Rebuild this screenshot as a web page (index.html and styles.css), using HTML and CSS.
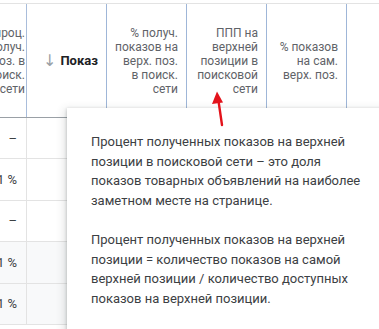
FILE: index.html
```html
<!DOCTYPE html>
<html lang="ru">
  <head>
    <meta charset="UTF-8" />
    <meta name="viewport" content="width=device-width, initial-scale=1.0" />
    <title>Таблица показов</title>
    <link rel="stylesheet" href="styles.css">
  </head>
  <body>
    <div class="table">
      <div class="head">
        <div class="hcell num"><span class="clip">% проц.<br>получ.<br>поз. в<br>поиск.<br>сети</span></div>
        <div class="hcell sort">
          <span class="sort-inner"><span class="sort-arrow">↓</span><b>Показы</b></span>
        </div>
        <div class="hcell num">% получ.<br>показов на<br>верх. поз.<br>в поиск.<br>сети</div>
        <div class="hcell num">ППП на<br>верхней<br>позиции в<br>поисковой<br>сети</div>
        <div class="hcell num">% показов<br>на сам.<br>верх. поз.</div>
        <div class="hcell last"></div>
      </div>

      <div class="row">
        <div class="cell num"><span class="clip">–</span></div>
        <div class="cell"></div><div class="cell"></div><div class="cell"></div><div class="cell"></div><div class="cell last"></div>
      </div>
      <div class="row">
        <div class="cell num"><span class="clip">2,1 %</span></div>
        <div class="cell"></div><div class="cell"></div><div class="cell"></div><div class="cell"></div><div class="cell last"></div>
      </div>
      <div class="row">
        <div class="cell num"><span class="clip">–</span></div>
        <div class="cell"></div><div class="cell"></div><div class="cell"></div><div class="cell"></div><div class="cell last"></div>
      </div>
      <div class="row shaded">
        <div class="cell num"><span class="clip">2,1 %</span></div>
        <div class="cell"></div><div class="cell"></div><div class="cell"></div><div class="cell"></div><div class="cell last"></div>
      </div>
      <div class="row shaded">
        <div class="cell num"><span class="clip">2,1 %</span></div>
        <div class="cell"></div><div class="cell"></div><div class="cell"></div><div class="cell"></div><div class="cell last"></div>
      </div>
    </div>

    <!-- подсказка к колонке ППП -->
    <div class="tooltip">
      <p>Процент полученных показов на верхней позиции в поисковой сети – это доля показов товарных объявлений на наиболее заметном месте на странице.</p>
      <p>Процент полученных показов на верхней позиции = количество показов на самой верхней позиции / количество доступных показов на верхней позиции.</p>
    </div>

    <svg class="pointer" width="20" height="36" viewBox="0 0 20 36">
      <line x1="13" y1="34" x2="9.5" y2="10" stroke="#e3131b" stroke-width="2.4" stroke-linecap="round" />
      <polygon points="8,0.5 3,13 14,11.5" fill="#e3131b" />
    </svg>
  </body>
</html>
```

FILE: styles.css
```css
body {
  margin: 0;
  background: #ffffff;
  font-family: Roboto, "Noto Sans", Arial, sans-serif;
  height: 100vh;
  overflow: hidden;
  position: relative;
}

.table {
  margin-top: 3px;
  border-top: 1px solid #e3e3e3;
}

.head,
.row {
  display: grid;
  grid-template-columns: 27px 80px 80px 80px 80px 1fr;
}

.head {
  height: 113px;
  border-bottom: 1px solid #9aa0a6;
}

.hcell {
  box-sizing: border-box;
  border-right: 1px solid #9fb6d8;
  display: flex;
  align-items: center;
  justify-content: flex-end;
  padding: 0 8px 0 0;
  font-size: 12px;
  line-height: 14px;
  color: #5f6368;
  text-align: right;
  overflow: hidden;
}

.head .hcell:first-child {
  border-right-color: #a9bddb;
  padding-right: 1px;
}

.clip {
  white-space: nowrap;
  flex-shrink: 0;
}

.hcell.sort {
  justify-content: flex-start;
  padding: 0 8px 0 16px;
}

.sort-inner {
  display: flex;
  align-items: center;
  gap: 4px;
  overflow: hidden;
  white-space: nowrap;
  font-size: 13px;
  color: #202124;
}

.sort-arrow {
  color: #9aa0a6;
  font-size: 16px;
  font-family: "DejaVu Sans", sans-serif;
}

.sort-inner b {
  font-weight: 700;
}

.hcell.last,
.cell.last {
  border-right: none;
}

.row {
  height: 41.4px;
  box-sizing: border-box;
  border-bottom: 1px solid #e3e3e3;
}

.row.shaded {
  background: #f8f9fa;
}

.cell {
  box-sizing: border-box;
  border-right: 1px solid #e3e3e3;
  display: flex;
  align-items: center;
  justify-content: flex-end;
  overflow: hidden;
  font-size: 13px;
  color: #3c4043;
}

.cell.num {
  padding-right: 9px;
}

.tooltip {
  position: absolute;
  left: 67px;
  top: 108px;
  width: 272px;
  padding: 24px 24px 30px;
  background: #ffffff;
  box-shadow: 0 1px 3px rgba(60, 64, 67, 0.3), 0 4px 8px 3px rgba(60, 64, 67, 0.15);
  font-size: 13px;
  line-height: 19.5px;
  color: #3c4043;
}

.tooltip p {
  margin: 0 0 20px;
}

.pointer {
  position: absolute;
  left: 209px;
  top: 91px;
}
```
